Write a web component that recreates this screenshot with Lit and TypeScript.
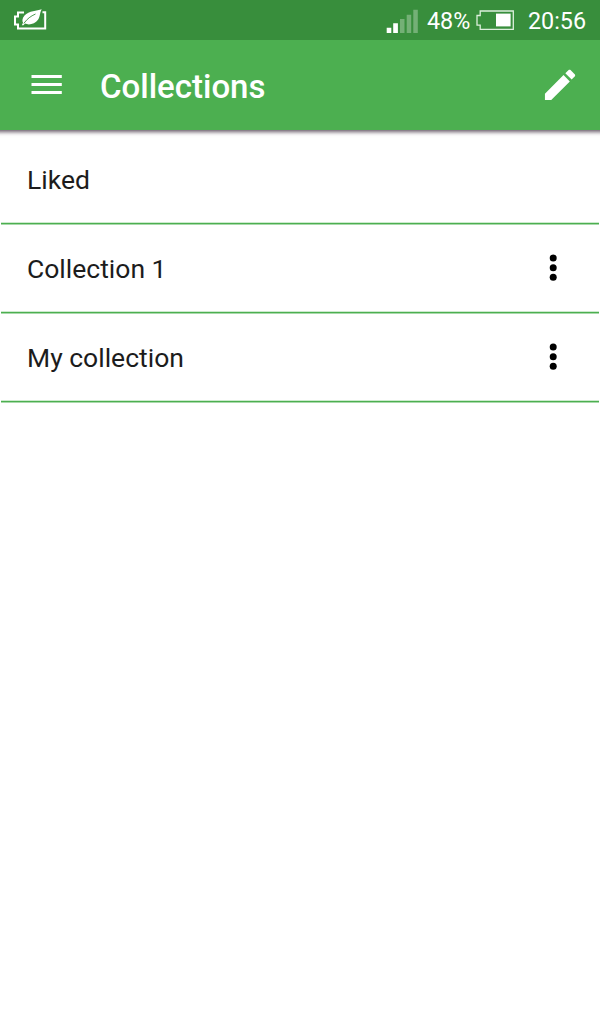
import { LitElement, html, css, svg, nothing } from "lit";
import { customElement, property } from "lit/decorators.js";

@customElement("status-bar")
class StatusBar extends LitElement {
  static styles = css`
    :host { display: flex; align-items: center; height: 40px; background: #388e3c; color: #fff; font-size: 23.300px; line-height: 40px; }
    svg { display: block; flex: none; }
    .spacer { flex: 1; }
    .percent { width: 58px; padding-left: 9px; box-sizing: border-box; white-space: nowrap; }
    .time { width: 84px; padding-left: 12px; box-sizing: border-box; white-space: nowrap; }
    .percent span, .time span { display: block; padding-top: 2px; line-height: 38px; }
  `;
  render() {
    return html`
      <svg width="60" height="40" viewBox="0 0 60 40" fill="none" stroke="#fff">
        <path d="M24 12.500H18V16.500H15V24.500H18V28.500H45.200V12.200H42.500" stroke-width="2" />
        <path d="M41.700 9.200C37 11 29 10.500 24.500 15.500C22.200 18.200 22 21 23 22.700L21.800 25.300H23.500L25 23.600C29 25.500 35 24 38 19.800C40.500 16 39.500 13 41.700 9.200Z" fill="#fff" stroke="none" />
        <path d="M23.800 23.400C27.500 18.500 30.500 16.300 35.500 14" stroke="#388e3c" stroke-width=".9" />
      </svg>
      <div class="spacer"></div>
      <svg width="32" height="40" viewBox="386 0 32 40" fill="#fff">
        <path d="M386.700 27.700h4.600V33h-4.600zM393.200 23.200h4.700V33h-4.700z" />
        <path opacity=".3" d="M400 19h4.500v14H400zM406.700 14.700h4.500V33h-4.500zM413.300 9.700h4.500V33h-4.500z" />
      </svg>
      <div class="percent"><span>48%</span></div>
      <svg width="40" height="40" viewBox="476 0 40 40">
        <path d="M480.200 11H513.300V29.300H480.200V25.200H477V15.500H480.200Z" fill="none" stroke="#dcefdc" stroke-width="1.300" />
        <path d="M496 13.600h14.600v12.800H496z" fill="#fff" />
      </svg>
      <div class="time"><span>20:56</span></div>
    `;
  }
}

@customElement("app-toolbar")
class AppToolbar extends LitElement {
  @property() heading = "";
  static styles = css`
    :host { display: flex; align-items: center; height: 90px; margin: 0 -10px; padding: 0 10px; background: #4caf50; color: #fff; box-shadow: 0 2px 4px rgba(40, 20, 40, 0.7); clip-path: inset(0 0 -10px 0); }
    svg { display: block; flex: none; }
    h1 { flex: 1; margin: 0; padding-top: 3px; font-size: 33px; font-weight: 500; line-height: 40px; }
  `;
  render() {
    return html`
      <svg width="100" height="90" viewBox="0 0 100 90" fill="#fff">
        <path d="M31.500 35h30.300v3H31.500zM31.500 43h30.300v3H31.500zM31.500 51h30.300v3H31.500z" />
      </svg>
      <h1>${this.heading}</h1>
      <svg width="80" height="90" viewBox="520 40 80 90" fill="#fff">
        <g transform="translate(539.900 64.700) scale(1.680)">
          <path d="M3 17.250V21h3.750L17.810 9.940l-3.750-3.750L3 17.250zM20.710 7.040c.39-.39.39-1.020 0-1.410l-2.340-2.340c-.39-.39-1.020-.39-1.410 0l-1.830 1.830 3.750 3.750 1.830-1.830z" />
        </g>
      </svg>
    `;
  }
}

@customElement("collection-row")
class CollectionRow extends LitElement {
  @property() name = "";
  @property({ type: Boolean }) menu = false;
  static styles = css`
    :host { display: flex; align-items: center; box-sizing: border-box; height: 89px; margin: 0 1px; padding: 0 0 0 26px; border-bottom: 1px solid #4caf50; box-shadow: 0 1px 0 #a9d9ab, inset 0 -1px 0 #cdeace; color: #1c1c1c; font-size: 26.500px; }
    .name { flex: 1; line-height: 40px; padding-top: 1px; }
    svg { display: block; }
  `;
  render() {
    return html`
      <span class="name">${this.name}</span>
      ${this.menu
        ? html`<svg width="80" height="88" viewBox="0 0 80 88">
            ${[34, 43.7, 53.3].map((y) => svg`<circle cx="34.200" cy=${y} r="3.500" />`)}
          </svg>`
        : nothing}
    `;
  }
}

@customElement("app-root")
class AppRoot extends LitElement {
  static styles = css`
    :host { display: block; height: 1024px; overflow: hidden; background: #fff; font-family: Roboto, sans-serif; }
    .list { padding-top: 5px; }
  `;
  render() {
    return html`
      <status-bar></status-bar>
      <app-toolbar heading="Collections"></app-toolbar>
      <div class="list">
        <collection-row name="Liked"></collection-row>
        <collection-row name="Collection 1" menu></collection-row>
        <collection-row name="My collection" menu></collection-row>
      </div>
    `;
  }
}
